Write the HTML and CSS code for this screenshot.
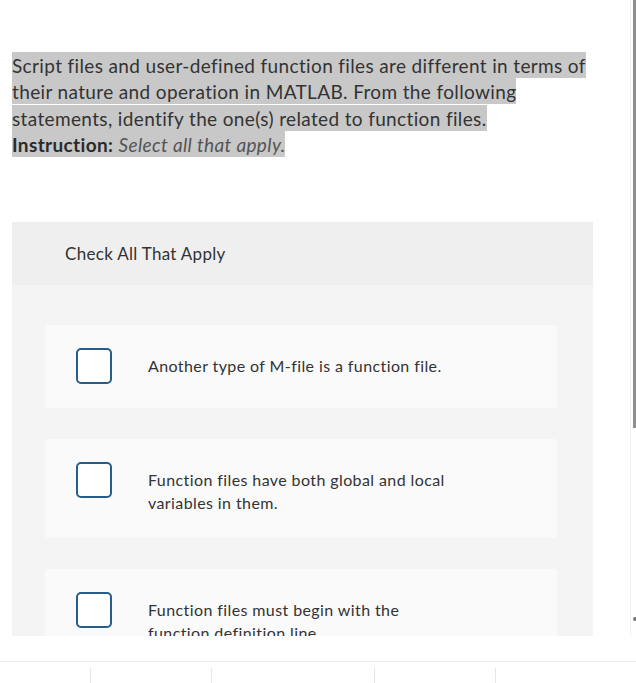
FILE: index.html
```html
<!DOCTYPE html>
<html lang="en">
<head>
<meta charset="utf-8">
<title>Check All That Apply</title>
<link rel="stylesheet" href="styles.css">
</head>
<body>
<div class="viewport">
  <div class="question">
    <p class="prompt"><span class="hl">Script files and user-defined function files are different in terms of</span><br><span class="hl">their nature and operation in MATLAB. From the following</span><br><span class="hl">statements, identify the one(s) related to function files.</span><br><span class="hl"><strong>Instruction:</strong> <em>Select all that apply.</em></span></p>
  </div>
  <section class="card">
    <header class="card-head">Check All That Apply</header>
    <div class="card-body">
      <label class="option">
        <span class="box"></span>
        <span class="opt-text">Another type of M-file is a function file.</span>
      </label>
      <label class="option">
        <span class="box"></span>
        <span class="opt-text">Function files have both global and local<br>variables in them.</span>
      </label>
      <label class="option">
        <span class="box"></span>
        <span class="opt-text">Function files must begin with the<br>function definition line.</span>
      </label>
    </div>
  </section>
  <div class="scroll-track"></div>
  <div class="scroll-thumb"></div>
  <div class="scroll-arrow"></div>
</div>
<footer class="footer">
  <div class="footer-row">
    <span class="seg seg1"></span>
    <span class="seg seg2"></span>
    <span class="seg seg3"></span>
    <span class="seg seg4"></span>
    <span class="seg seg5"></span>
  </div>
</footer>
</body>
</html>
```

FILE: styles.css
```css
html, body {
  margin: 0;
  padding: 0;
  background: #ffffff;
}
body {
  font-family: Lato, "Open Sans", "Liberation Sans", sans-serif;
  font-variant-ligatures: none;
  color: #333333;
  width: 636px;
  height: 683px;
  overflow: hidden;
}
.viewport {
  position: relative;
  height: 636px;
  overflow: hidden;
}
.question {
  padding: 53px 0 0 12px;
}
.prompt {
  margin: 0;
  font-size: 19px;
  line-height: 26.3px;
  letter-spacing: 0.36px;
  color: #333333;
}
.hl {
  background: #c8c8c8;
  padding: 2px 0 1px;
}
.prompt strong {
  font-weight: 700;
  color: #2b2b2b;
}
.prompt em {
  font-style: italic;
  color: #555555;
}
.card {
  margin: 64px 0 0 12px;
  width: 581px;
  background: #f4f4f4;
}
.card-head {
  height: 63px;
  background: #efefef;
  padding-left: 53px;
  display: flex;
  align-items: center;
  font-size: 17px;
  letter-spacing: 0.3px;
  color: #333333;
}
.card-body {
  padding: 40px 36px 40px 33px;
  display: flex;
  flex-direction: column;
  gap: 31px;
}
.option {
  display: flex;
  align-items: flex-start;
  background: #fafafa;
  padding: 23px 20px 24px 31px;
  border-radius: 3px;
}
.box {
  flex: none;
  width: 32px;
  height: 32px;
  border: 2px solid #275d8a;
  border-radius: 5px;
  background: #ffffff;
}
.opt-text {
  margin-left: 36px;
  padding-top: 6px;
  font-size: 16px;
  line-height: 23px;
  letter-spacing: 0.4px;
  color: #333333;
}
.scroll-track {
  position: absolute;
  top: 0;
  right: 5px;
  width: 1px;
  height: 636px;
  background: #f3f3f3;
}
.scroll-thumb {
  position: absolute;
  top: 0;
  right: 0;
  width: 3px;
  height: 428px;
  background: #8f8f8f;
}
.scroll-arrow {
  position: absolute;
  top: 617px;
  right: 0;
  width: 3px;
  height: 4px;
  background: #777777;
  border-radius: 2px 0 0 2px;
}
.footer {
  height: 47px;
  padding-top: 25px;
  box-sizing: border-box;
}
.footer-row {
  border-top: 1px solid #ebebeb;
  display: flex;
  height: 21px;
  padding-top: 6px;
  box-sizing: border-box;
}
.seg {
  height: 15px;
  border-right: 1px solid #e6e6e6;
}
.seg1 { width: 90px; }
.seg2 { width: 120px; }
.seg3 { width: 162px; }
.seg4 { width: 120px; }
.seg5 { flex: 1; border-right: none; }
```
